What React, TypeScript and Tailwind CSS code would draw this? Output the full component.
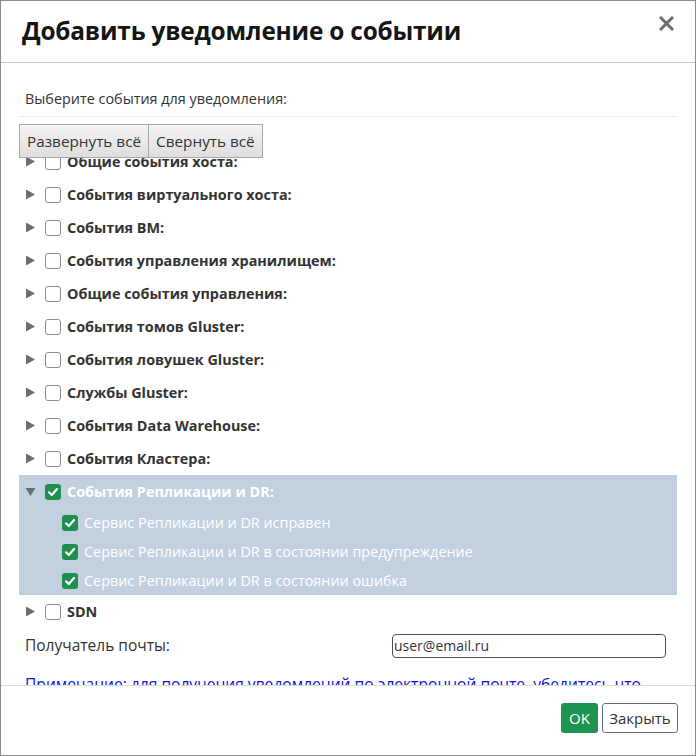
import React from 'react';

const groups = [
  'Общие события хоста:',
  'События виртуального хоста:',
  'События ВМ:',
  'События управления хранилищем:',
  'Общие события управления:',
  'События томов Gluster:',
  'События ловушек Gluster:',
  'Службы Gluster:',
  'События Data Warehouse:',
  'События Кластера:',
];

const children = [
  'Сервис Репликации и DR исправен',
  'Сервис Репликации и DR в состоянии предупреждение',
  'Сервис Репликации и DR в состоянии ошибка',
];

function Caret({ open }: { open?: boolean }) {
  return (
    <svg width="11" height="11" viewBox="0 0 11 11" className="shrink-0">
      {open ? (
        <path d="M0.5 2 L10.5 2 L5.5 10 Z" fill="#6a6e73" />
      ) : (
        <path d="M1 0.5 L10 5.5 L1 10.5 Z" fill="#6a6e73" />
      )}
    </svg>
  );
}

function Box({ checked }: { checked?: boolean }) {
  if (checked) {
    return (
      <span className="w-4 h-4 rounded-[3px] bg-[#1f8f4f] flex items-center justify-center shrink-0">
        <svg width="12" height="12" viewBox="0 0 12 12">
          <path d="M2 6.3 L4.8 9 L10 3" fill="none" stroke="#fff" strokeWidth="2.2" strokeLinecap="round" strokeLinejoin="round" />
        </svg>
      </span>
    );
  }
  return <span className="block w-4 h-4 rounded-[3px] border border-[#8a8d90] bg-white shrink-0" />;
}

function GroupRow({ label }: { label: string }) {
  return (
    <div className="h-[33px] flex items-center pl-[6px]">
      <Caret />
      <span className="ml-[9px]"><Box /></span>
      <span className="ml-[6px] text-[14.4px] font-bold text-[#333]">{label}</span>
    </div>
  );
}

export default function App() {
  return (
    <div
      className="w-[696px] h-[756px] border border-[#8c8c8c] bg-white flex flex-col overflow-hidden"
      style={{ fontFamily: '"Open Sans", "Noto Sans", sans-serif' }}
    >
      {/* Header */}
      <div className="h-[62px] shrink-0 border-b border-[#c8c8cc] flex items-center justify-between pl-[21px] pr-[21px]">
        <h1 className="text-[24.4px] font-bold text-[#151515] tracking-[-0.2px]">Добавить уведомление о событии</h1>
        <svg width="15" height="15" viewBox="0 0 15 15" className="-mt-[16px]">
          <path d="M2 2 L13 13 M13 2 L2 13" stroke="#6a6e73" strokeWidth="3" strokeLinecap="square" />
        </svg>
      </div>

      {/* Body */}
      <div className="flex-1 overflow-hidden px-[18px]">
        <p className="mt-[26px] pl-[6px] text-[14.4px] leading-[20px] text-[#333]">Выберите события для уведомления:</p>
        <div className="mt-[7px] border-t border-[#eeeeee]" />
        <div className="mt-[7px] flex">
          <button className="h-[34px] px-[7px] border border-[#a8a8a8] bg-gradient-to-b from-[#f4f4f4] to-[#dedede] text-[15.3px] text-[#333]">
            Развернуть всё
          </button>
          <button className="h-[34px] px-[7px] border border-l-0 border-[#a8a8a8] bg-gradient-to-b from-[#f4f4f4] to-[#dedede] text-[15.3px] text-[#333]">
            Свернуть всё
          </button>
        </div>

        <div className="h-[469px] overflow-hidden">
          <div className="-mt-[13px]">
            {groups.map((g) => (
              <GroupRow key={g} label={g} />
            ))}
            <div className="bg-[#c3d0df]">
              <div className="h-[33px] flex items-center pl-[6px]">
                <Caret open />
                <span className="ml-[9px]"><Box checked /></span>
                <span className="ml-[6px] text-[14.4px] font-bold text-white">События Репликации и DR:</span>
              </div>
              {children.map((c) => (
                <div key={c} className="h-[29px] flex items-center pl-[43px]">
                  <Box checked />
                  <span className="ml-[6px] text-[14.4px] text-white">{c}</span>
                </div>
              ))}
            </div>
            <GroupRow label="SDN" />
          </div>
        </div>

        <div className="flex items-center h-[37px] pl-[6px]">
          <span className="w-[367px] text-[15.5px] text-[#333]">Получатель почты:</span>
          <input
            readOnly
            value="user@email.ru"
            className="w-[274px] h-[24px] border border-[#4f5255] rounded-[4px] px-[1px] text-[14px] text-[#333] outline-none"
          />
        </div>
        <p className="mt-[9px] pl-[6px] text-[15.6px] leading-[22px] text-[#0b14e6] underline decoration-[#0b14e6] whitespace-nowrap">
          Примечание: для получения уведомлений по электронной почте, убедитесь что
        </p>
      </div>

      {/* Footer */}
      <div className="h-[70px] shrink-0 border-t border-[#dcdcdc] flex items-start justify-end gap-[4px] pr-[17px] pt-[17px]">
        <button className="h-[30px] w-[37px] rounded-[3px] bg-[#1f9450] text-white text-[15px]">OK</button>
        <button className="h-[30px] w-[76px] rounded-[3px] border border-[#6a6e73] bg-white text-[#333] text-[15px]">Закрыть</button>
      </div>
    </div>
  );
}
